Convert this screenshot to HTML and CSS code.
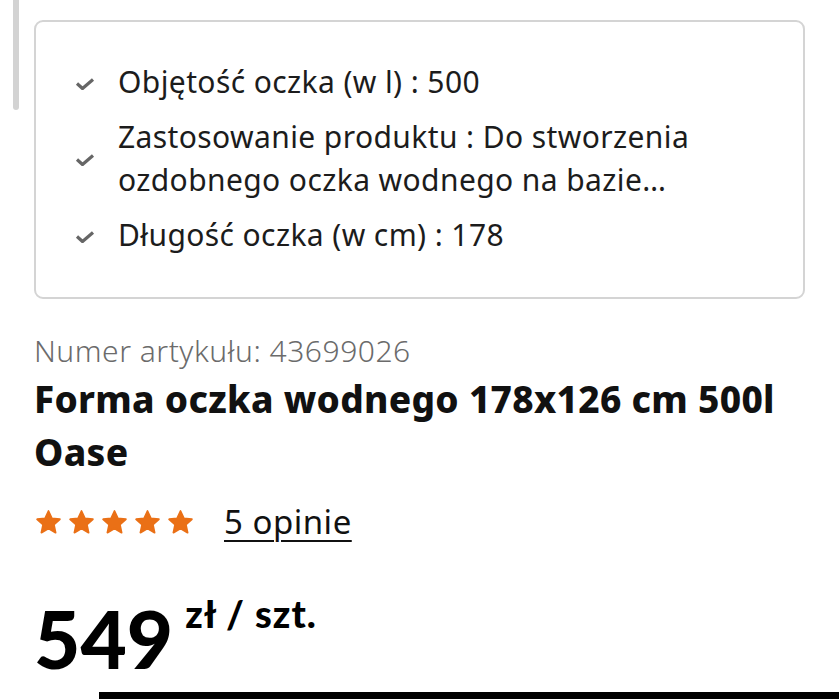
FILE: index.html
```html
<!DOCTYPE html>
<html lang="pl">
<head>
<meta charset="utf-8">
<link rel="stylesheet" href="styles.css">
</head>
<body>
<div class="scrollbar"></div>
<main class="page">
  <section class="card">
    <ul class="features">
      <li class="feature">
        <svg class="check" viewBox="0 0 20 12" width="20" height="12"><path d="M2 5.5 L7.5 10.5 L18 1.5" fill="none" stroke="#666" stroke-width="3.2" stroke-linejoin="round"/></svg>
        <span>Objętość oczka (w l) : 500</span>
      </li>
      <li class="feature">
        <svg class="check" viewBox="0 0 20 12" width="20" height="12"><path d="M2 5.5 L7.5 10.5 L18 1.5" fill="none" stroke="#666" stroke-width="3.2" stroke-linejoin="round"/></svg>
        <span>Zastosowanie produktu : Do stworzenia<br>ozdobnego oczka wodnego na bazie…</span>
      </li>
      <li class="feature">
        <svg class="check" viewBox="0 0 20 12" width="20" height="12"><path d="M2 5.5 L7.5 10.5 L18 1.5" fill="none" stroke="#666" stroke-width="3.2" stroke-linejoin="round"/></svg>
        <span>Długość oczka (w cm) : 178</span>
      </li>
    </ul>
  </section>

  <p class="article">Numer artykułu: 43699026</p>
  <h1 class="title">Forma oczka wodnego 178x126 cm 500l Oase</h1>

  <div class="rating">
    <div class="stars">
      <svg viewBox="0 0 24 24" width="27" height="27"><path class="star" d="M12 1.8l3 6.6 7.1.7-5.3 4.8 1.5 7.1L12 17.4 5.7 21l1.5-7.1L1.9 9.1l7.1-.7z"/></svg>
      <svg viewBox="0 0 24 24" width="27" height="27"><path class="star" d="M12 1.8l3 6.6 7.1.7-5.3 4.8 1.5 7.1L12 17.4 5.7 21l1.5-7.1L1.9 9.1l7.1-.7z"/></svg>
      <svg viewBox="0 0 24 24" width="27" height="27"><path class="star" d="M12 1.8l3 6.6 7.1.7-5.3 4.8 1.5 7.1L12 17.4 5.7 21l1.5-7.1L1.9 9.1l7.1-.7z"/></svg>
      <svg viewBox="0 0 24 24" width="27" height="27"><path class="star" d="M12 1.8l3 6.6 7.1.7-5.3 4.8 1.5 7.1L12 17.4 5.7 21l1.5-7.1L1.9 9.1l7.1-.7z"/></svg>
      <svg viewBox="0 0 24 24" width="27" height="27"><path class="star" d="M12 1.8l3 6.6 7.1.7-5.3 4.8 1.5 7.1L12 17.4 5.7 21l1.5-7.1L1.9 9.1l7.1-.7z"/></svg>
    </div>
    <a class="reviews" href="#">5 opinie</a>
  </div>

  <div class="price">
    <span class="amount">549</span>
    <span class="unit">zł / szt.</span>
  </div>
</main>
<div class="bottom-bar"></div>
</body>
</html>
```

FILE: styles.css
```css
html, body {
  margin: 0;
  padding: 0;
  background: #fff;
  height: 699px;
  overflow: hidden;
}
body {
  font-family: "Noto Sans", "Open Sans", sans-serif;
  color: #1a1a1a;
  position: relative;
}
.scrollbar {
  position: absolute;
  left: 13px;
  top: -6px;
  width: 6px;
  height: 116px;
  background: #d3d3d3;
  border-radius: 3px;
}
.page {
  padding: 20px 34px 0 34px;
}
.card {
  border: 2px solid #d4d4d4;
  border-radius: 9px;
  padding: 38px 40px 41px 39px;
}
.features {
  list-style: none;
  margin: 0;
  padding: 0;
  display: flex;
  flex-direction: column;
  gap: 12px;
}
.feature {
  display: flex;
  align-items: center;
  gap: 23px;
  font-size: 30px;
  letter-spacing: 0.4px;
  line-height: 43px;
  color: #1c1c1c;
}
.check {
  flex: none;
  margin-top: 4px;
}
.article {
  margin: 35px 0 0 0;
  font-size: 30px;
  letter-spacing: 0.5px;
  line-height: 34px;
  font-weight: 300;
  color: #6b6b6b;
}
.title {
  margin: 4px 0 0 0;
  font-size: 37px;
  letter-spacing: 0.3px;
  line-height: 53px;
  font-weight: 800;
  color: #111;
  width: 770px;
}
.rating {
  display: flex;
  align-items: center;
  gap: 30px;
  margin-top: 24px;
}
.stars {
  display: flex;
  gap: 6px;
  margin-left: 1px;
}
.star {
  fill: #ea7016;
  stroke: #ea7016;
  stroke-width: 1.6;
  stroke-linejoin: round;
}
.reviews {
  font-size: 33px;
  letter-spacing: 0.5px;
  line-height: 40px;
  color: #111;
  text-decoration: underline;
  text-underline-offset: 6px;
  text-decoration-thickness: 2px;
}
.price {
  display: flex;
  align-items: flex-start;
  gap: 12px;
  margin-top: 56px;
}
.amount {
  font-family: "Lato", sans-serif;
  font-weight: 900;
  font-size: 80px;
  line-height: 80px;
  color: #000;
}
.unit {
  font-family: "Lato", sans-serif;
  font-weight: 900;
  font-size: 38px;
  letter-spacing: 1px;
  line-height: 40px;
  margin-top: -5px;
  color: #000;
}
.bottom-bar {
  position: absolute;
  left: 99px;
  right: 0;
  top: 692px;
  height: 7px;
  background: #000;
}
```
